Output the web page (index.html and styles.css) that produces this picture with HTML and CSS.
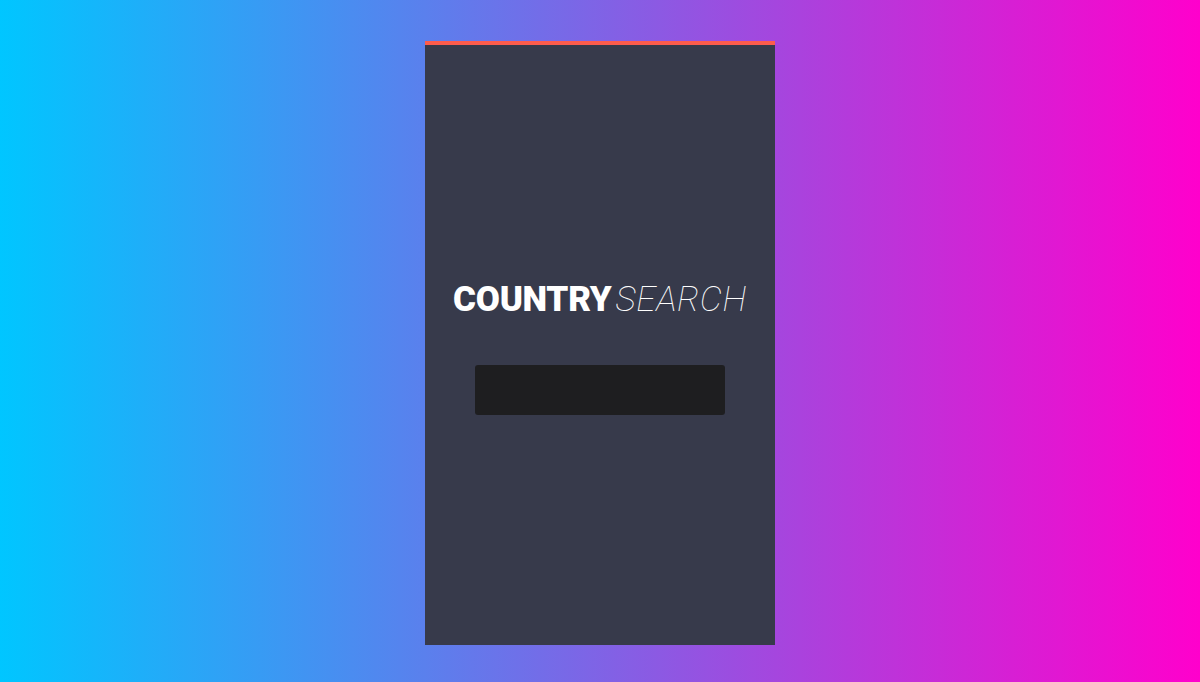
FILE: index.html
```html
<!DOCTYPE html>
<html>
<head>
<meta charset="utf-8">
<link rel="stylesheet" href="styles.css">
</head>
<body>
<div class="panel">
  <h1 class="logo"><span class="bold">COUNTRY</span><span class="light">SEARCH</span></h1>
  <input class="search" type="text" aria-label="Search">
</div>
</body>
</html>
```
FILE: styles.css
```css
html, body {
  margin: 0;
  height: 100%;
}
body {
  background: linear-gradient(to right, #00c6ff, #ff00cc);
  font-family: Roboto, "Liberation Sans", sans-serif;
  display: flex;
  justify-content: center;
  align-items: flex-start;
}
.panel {
  margin-top: 41px;
  width: 350px;
  height: 366px;
  background: #373a4b;
  border-top: 4px solid #fd5c4c;
  display: flex;
  flex-direction: column;
  align-items: center;
  padding-top: 234px;
}
.logo {
  margin: 0;
  font-size: 35px;
  line-height: 42px;
  color: #fff;
  white-space: nowrap;
}
.bold {
  font-weight: 900;
  letter-spacing: -0.3px;
}
.light {
  font-weight: 100;
  font-style: italic;
  margin-left: 4px;
  letter-spacing: 0.6px;
}
.search {
  margin-top: 44px;
  width: 250px;
  height: 50px;
  box-sizing: border-box;
  background: #1e1e20;
  border: none;
  border-radius: 3px;
  outline: none;
  padding: 0 12px;
  color: #fff;
  font-size: 18px;
  font-family: inherit;
}
```
